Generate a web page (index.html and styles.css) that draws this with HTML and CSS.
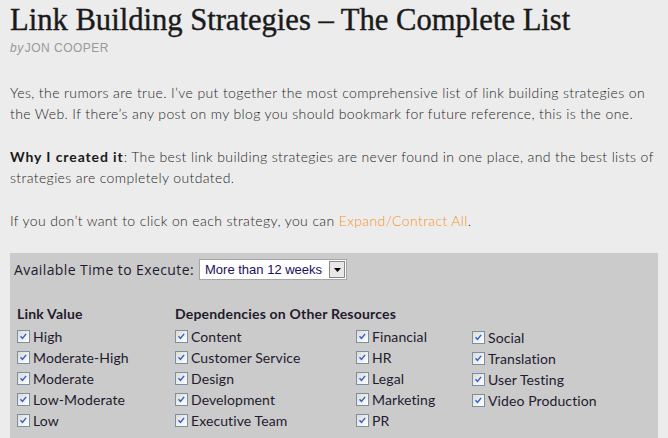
FILE: index.html
```html
<!DOCTYPE html>
<html lang="en">
<head>
<meta charset="UTF-8">
<meta name="viewport" content="width=device-width, initial-scale=1.0">
<title>Link Building Strategies – The Complete List</title>
<link rel="stylesheet" href="styles.css">
</head>
<body>

<div class="post">
  <h1>Link Building Strategies – The Complete List</h1>
  <div class="byline"><em>by</em>JON COOPER</div>

  <p>Yes, the rumors are true. I’ve put together the most comprehensive list of link building strategies on the Web. If there’s any post on my blog you should bookmark for future reference, this is the one.</p>
  <p><strong>Why I created it</strong>: The best link building strategies are never found in one place, and the best lists of strategies are completely outdated.</p>
  <p>If you don’t want to click on each strategy, you can <a href="#">Expand/Contract All</a>.</p>

  <div class="filters">
    <div class="time-row">
      <label for="time">Available Time to Execute:</label>
      <div class="select">
        <span class="select-value">More than 12 weeks</span>
        <span class="select-btn"><svg width="7" height="4" viewBox="0 0 7 4"><path d="M0 0h7L3.5 4z" fill="#000"/></svg></span>
      </div>
    </div>

    <div class="groups">
      <div class="group">
        <h4>Link Value</h4>
        <div class="opts">
          <label class="opt"><span class="box"><svg viewBox="0 0 13 13"><path d="M3 6.2l2.3 2.6L9.6 3.4" fill="none" stroke="#2f5fd0" stroke-width="1.7"/></svg></span>High</label>
          <label class="opt"><span class="box"><svg viewBox="0 0 13 13"><path d="M3 6.2l2.3 2.6L9.6 3.4" fill="none" stroke="#2f5fd0" stroke-width="1.7"/></svg></span>Moderate-High</label>
          <label class="opt"><span class="box"><svg viewBox="0 0 13 13"><path d="M3 6.2l2.3 2.6L9.6 3.4" fill="none" stroke="#2f5fd0" stroke-width="1.7"/></svg></span>Moderate</label>
          <label class="opt"><span class="box"><svg viewBox="0 0 13 13"><path d="M3 6.2l2.3 2.6L9.6 3.4" fill="none" stroke="#2f5fd0" stroke-width="1.7"/></svg></span>Low-Moderate</label>
          <label class="opt"><span class="box"><svg viewBox="0 0 13 13"><path d="M3 6.2l2.3 2.6L9.6 3.4" fill="none" stroke="#2f5fd0" stroke-width="1.7"/></svg></span>Low</label>
        </div>
      </div>

      <div class="group deps">
        <h4>Dependencies on Other Resources</h4>
        <div class="deps-cols">
          <div class="opts col-a">
            <label class="opt"><span class="box"><svg viewBox="0 0 13 13"><path d="M3 6.2l2.3 2.6L9.6 3.4" fill="none" stroke="#2f5fd0" stroke-width="1.7"/></svg></span>Content</label>
            <label class="opt"><span class="box"><svg viewBox="0 0 13 13"><path d="M3 6.2l2.3 2.6L9.6 3.4" fill="none" stroke="#2f5fd0" stroke-width="1.7"/></svg></span>Customer Service</label>
            <label class="opt"><span class="box"><svg viewBox="0 0 13 13"><path d="M3 6.2l2.3 2.6L9.6 3.4" fill="none" stroke="#2f5fd0" stroke-width="1.7"/></svg></span>Design</label>
            <label class="opt"><span class="box"><svg viewBox="0 0 13 13"><path d="M3 6.2l2.3 2.6L9.6 3.4" fill="none" stroke="#2f5fd0" stroke-width="1.7"/></svg></span>Development</label>
            <label class="opt"><span class="box"><svg viewBox="0 0 13 13"><path d="M3 6.2l2.3 2.6L9.6 3.4" fill="none" stroke="#2f5fd0" stroke-width="1.7"/></svg></span>Executive Team</label>
          </div>
          <div class="opts col-b">
            <label class="opt"><span class="box"><svg viewBox="0 0 13 13"><path d="M3 6.2l2.3 2.6L9.6 3.4" fill="none" stroke="#2f5fd0" stroke-width="1.7"/></svg></span>Financial</label>
            <label class="opt"><span class="box"><svg viewBox="0 0 13 13"><path d="M3 6.2l2.3 2.6L9.6 3.4" fill="none" stroke="#2f5fd0" stroke-width="1.7"/></svg></span>HR</label>
            <label class="opt"><span class="box"><svg viewBox="0 0 13 13"><path d="M3 6.2l2.3 2.6L9.6 3.4" fill="none" stroke="#2f5fd0" stroke-width="1.7"/></svg></span>Legal</label>
            <label class="opt"><span class="box"><svg viewBox="0 0 13 13"><path d="M3 6.2l2.3 2.6L9.6 3.4" fill="none" stroke="#2f5fd0" stroke-width="1.7"/></svg></span>Marketing</label>
            <label class="opt"><span class="box"><svg viewBox="0 0 13 13"><path d="M3 6.2l2.3 2.6L9.6 3.4" fill="none" stroke="#2f5fd0" stroke-width="1.7"/></svg></span>PR</label>
          </div>
          <div class="opts col-c">
            <label class="opt"><span class="box"><svg viewBox="0 0 13 13"><path d="M3 6.2l2.3 2.6L9.6 3.4" fill="none" stroke="#2f5fd0" stroke-width="1.7"/></svg></span>Social</label>
            <label class="opt"><span class="box"><svg viewBox="0 0 13 13"><path d="M3 6.2l2.3 2.6L9.6 3.4" fill="none" stroke="#2f5fd0" stroke-width="1.7"/></svg></span>Translation</label>
            <label class="opt"><span class="box"><svg viewBox="0 0 13 13"><path d="M3 6.2l2.3 2.6L9.6 3.4" fill="none" stroke="#2f5fd0" stroke-width="1.7"/></svg></span>User Testing</label>
            <label class="opt"><span class="box"><svg viewBox="0 0 13 13"><path d="M3 6.2l2.3 2.6L9.6 3.4" fill="none" stroke="#2f5fd0" stroke-width="1.7"/></svg></span>Video Production</label>
          </div>
        </div>
      </div>
    </div>
  </div>
</div>

</body>
</html>
```

FILE: styles.css
```css
body {
  margin: 0;
  padding: 0;
  background-color: #ececec;
  font-family: Lato, "Open Sans", sans-serif;
  color: #333;
}

.post {
  padding: 0 10px 0 10px;
}

h1 {
  margin: 0;
  padding-top: 2px;
  font-family: "Liberation Serif", "Times New Roman", serif;
  font-weight: normal;
  font-size: 30.6px;
  line-height: 36px;
  color: #1a1a1a;
  -webkit-text-stroke: 0.4px #1a1a1a;
}

.byline {
  margin-top: 2px;
  font-family: "Liberation Sans", Arial, sans-serif;
  font-size: 12px;
  line-height: 16px;
  letter-spacing: 0.5px;
  color: #9a9a9a;
}

.byline em {
  margin-right: 1px;
}

p {
  margin: 26px 0 0 0;
  font-size: 14px;
  font-weight: 300;
  letter-spacing: 0.38px;
  line-height: 21px;
  color: #1f1f1f;
}

p + p {
  margin-top: 22px;
}

p strong {
  font-weight: bold;
  letter-spacing: 0.9px;
  color: #1a1a1a;
}

p a {
  color: #f7931e;
  text-decoration: none;
}

.filters {
  margin-top: 22px;
  background-color: #cbcbcb;
  padding: 6px 0 10px 4px;
  width: 644px;
  font-family: Lato, "Open Sans", sans-serif;
  font-size: 14px;
  color: #231a2e;
}

.time-row {
  display: flex;
  align-items: center;
  gap: 5px;
}

.time-row label {
  font-family: "Open Sans", Lato, sans-serif;
  font-size: 14px;
  letter-spacing: 0.4px;
}

.select {
  display: flex;
  align-items: stretch;
  height: 19px;
  background: #fff;
  border: 1px solid #a5a5a5;
  font-family: "Liberation Sans", Arial, sans-serif;
  font-size: 13px;
  color: #1a1060;
}

.select-value {
  padding: 0 6px 0 5px;
  line-height: 19px;
}

.select-btn {
  width: 16px;
  margin: 1px;
  border: 1px solid #888;
  background: #e8e8e8;
  display: flex;
  align-items: center;
  justify-content: center;
  box-sizing: border-box;
}

.groups {
  display: flex;
  margin-top: 24px;
  padding-left: 3px;
}

.group h4 {
  margin: 0 0 2px 0;
  font-size: 14px;
  font-weight: bold;
  letter-spacing: 0.2px;
  line-height: 20px;
}

.group:first-child {
  width: 158px;
}

.deps-cols {
  display: flex;
}

.col-a {
  width: 181px;
}

.col-b {
  width: 116px;
}

.col-c {
  padding-top: 1px;
}

.opts {
  display: flex;
  flex-direction: column;
}

.opt {
  display: flex;
  align-items: center;
  height: 21px;
  letter-spacing: 0.1px;
}

.box {
  width: 13px;
  height: 13px;
  box-sizing: border-box;
  border: 1px solid #7b8fa3;
  background: linear-gradient(135deg, #dcdcd5, #fff);
  margin-right: 3px;
  display: flex;
}

.box svg {
  width: 11px;
  height: 11px;
}
```
